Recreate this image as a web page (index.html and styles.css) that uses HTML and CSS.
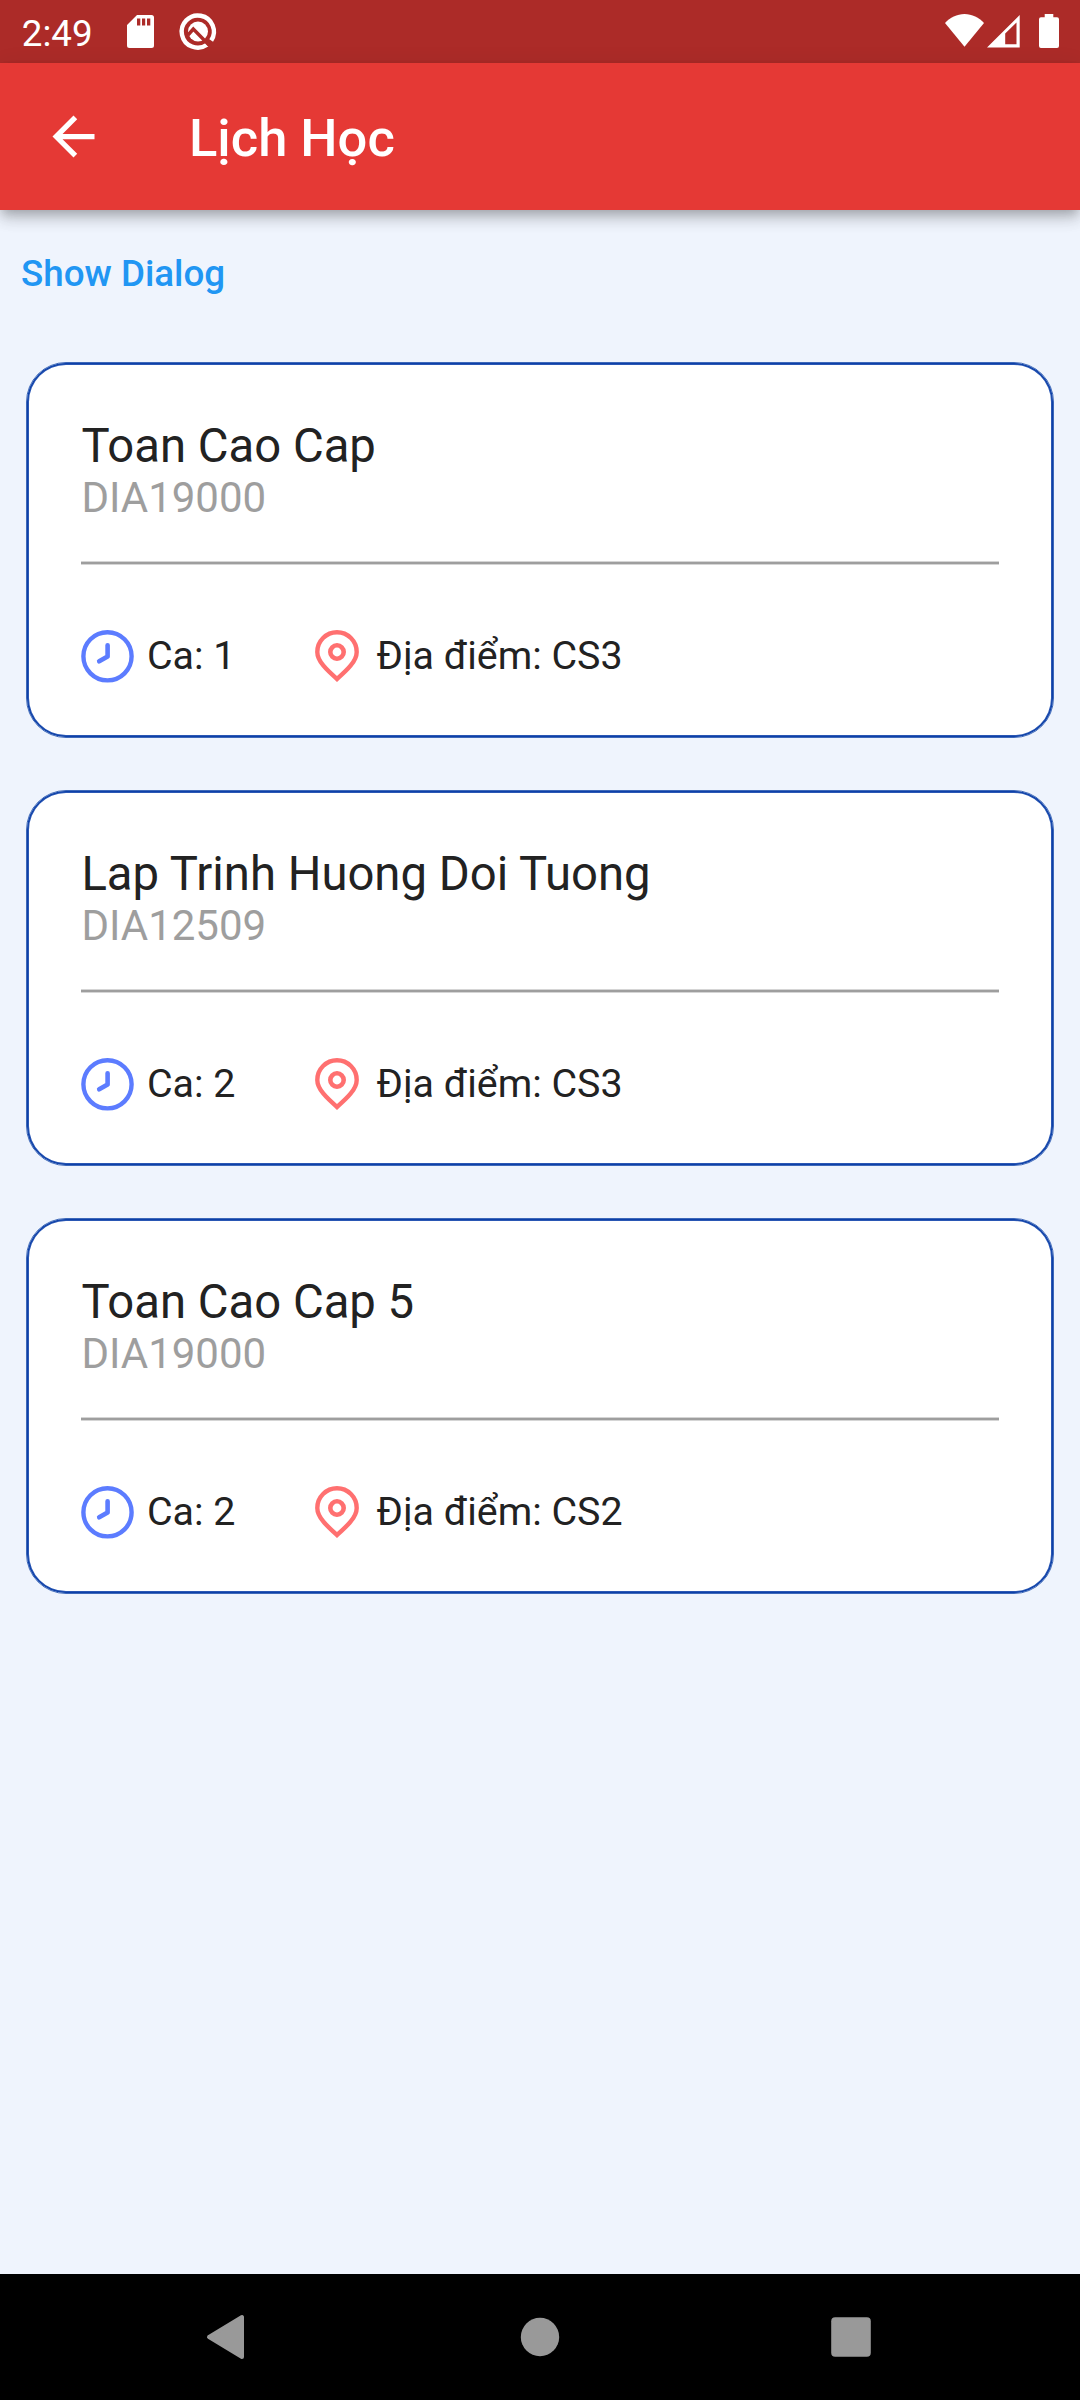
FILE: index.html
```html
<!DOCTYPE html>
<html lang="vi">
<head>
<meta charset="utf-8">
<title>Lịch Học</title>
<link rel="stylesheet" href="styles.css">
</head>
<body>
<svg class="defs" aria-hidden="true">
  <symbol id="clock" viewBox="0 0 53 53">
    <circle cx="26.5" cy="26.3" r="24.1" fill="none" stroke="#5c7cff" stroke-width="4.4"/>
    <path d="M26.6 15.3V26.5L18.2 31.3" fill="none" stroke="#5c7cff" stroke-width="4.6" stroke-linecap="round" stroke-linejoin="round"/>
  </symbol>
  <symbol id="pin" viewBox="0 0 44 53">
    <path d="M22 49C12.500 40.500 2.300 31.500 2.300 21.900A19.700 19.700 0 0 1 41.700 21.900C41.700 31.500 31.500 40.500 22 49Z" fill="none" stroke="#ff7070" stroke-width="4.400"/>
    <circle cx="22" cy="22" r="6.700" fill="none" stroke="#ff7070" stroke-width="4.600"/>
  </symbol>
</svg>
<div class="screen">
  <header class="status-bar">
    <span class="time">2:49</span>
    <svg class="sd" viewBox="0 0 27 33"><path fill="#fff" fill-rule="evenodd" d="M10 0H24.500A2.500 2.500 0 0 1 27 2.500V30.500A2.500 2.500 0 0 1 24.500 33H2.500A2.500 2.500 0 0 1 0 30.500V10ZM10 3.500V10.500H13.300V3.500ZM15 3.500V10.500H18.200V3.500ZM20 3.500V10.500H23.300V3.500Z"/></svg>
    <svg class="q" viewBox="0 0 44 44">
      <path d="M31 34.800A16.100 16.100 0 1 1 35.200 30.500" fill="none" stroke="#fff" stroke-width="4.400"/>
      <circle cx="22" cy="21.500" r="10" fill="#fff"/>
      <path d="M12 25L17.300 19L33 35" fill="none" stroke="#ac2b28" stroke-width="3.400"/>
    </svg>
    <span class="spacer"></span>
    <svg class="wifi" viewBox="0 0 39 33"><path fill="#fff" d="M0 9C5 3.500 12 0 19.500 0S34 3.500 39 9L19.500 32.800Z"/></svg>
    <svg class="cell" viewBox="0 0 33 33"><path fill="#fff" fill-rule="evenodd" d="M0 32.500L32.700 0V32.500ZM18.200 18.500V29.300H29.500V7.500Z"/></svg>
    <svg class="battery" viewBox="0 0 20 34"><path fill="#fff" d="M5.700 0H14.300V3.300H18A2 2 0 0 1 20 5.300V32A2 2 0 0 1 18 34H2A2 2 0 0 1 0 32V5.300A2 2 0 0 1 2 3.300H5.700Z"/></svg>
  </header>
  <div class="app-bar">
    <svg class="back" viewBox="0 0 24 24"><path fill="#fff" d="M20 11H7.830l5.590-5.590L12 4l-8 8 8 8 1.410-1.410L7.830 13H20v-2z"/></svg>
    <h1 class="title">Lịch Học</h1>
  </div>
  <main class="content">
    <button class="text-button">Show Dialog</button>
    <section class="cards">
      <article class="card">
        <h2 class="subject">Toan Cao Cap</h2>
        <p class="code">DIA19000</p>
        <div class="divider"></div>
        <div class="meta">
          <svg class="clock"><use href="#clock"/></svg><span class="shift">Ca: 1</span>
          <svg class="pin"><use href="#pin"/></svg><span>Địa điểm: CS3</span>
        </div>
      </article>
      <article class="card">
        <h2 class="subject">Lap Trinh Huong Doi Tuong</h2>
        <p class="code">DIA12509</p>
        <div class="divider"></div>
        <div class="meta">
          <svg class="clock"><use href="#clock"/></svg><span class="shift">Ca: 2</span>
          <svg class="pin"><use href="#pin"/></svg><span>Địa điểm: CS3</span>
        </div>
      </article>
      <article class="card">
        <h2 class="subject">Toan Cao Cap 5</h2>
        <p class="code">DIA19000</p>
        <div class="divider"></div>
        <div class="meta">
          <svg class="clock"><use href="#clock"/></svg><span class="shift">Ca: 2</span>
          <svg class="pin"><use href="#pin"/></svg><span>Địa điểm: CS2</span>
        </div>
      </article>
    </section>
  </main>
  <nav class="nav-bar">
    <svg viewBox="0 0 84 84"><path d="M22 42L55 22V62Z" fill="#999" stroke="#999" stroke-width="4" stroke-linejoin="round"/></svg>
    <svg viewBox="0 0 84 84"><circle cx="42" cy="42" r="19.200" fill="#999"/></svg>
    <svg viewBox="0 0 84 84"><rect x="22.200" y="22.200" width="39.600" height="39.600" rx="4" fill="#999"/></svg>
  </nav>
</div>
</body>
</html>
```
FILE: styles.css
```css
* { box-sizing: border-box; margin: 0; }
body { font-family: Roboto, "Noto Sans", sans-serif; background: #eff4fd; }
svg { display: block; flex: none; }
.defs { display: none; }
.screen { display: flex; flex-direction: column; width: 1080px; height: 2400px; overflow: hidden; }

.status-bar { display: flex; align-items: flex-start; flex: none; height: 63px; padding: 12px 21px 0; background: #ac2b28; color: #fff; }
.time { width: 105.500px; padding-left: 0.800px; font-size: 36.750px; line-height: 43px; }
.sd { width: 27px; height: 33px; margin-top: 3px; }
.q { width: 44px; height: 44px; margin: -2px 0 0 22.500px; }
.spacer { flex: 1; }
.wifi { width: 39px; height: 33px; margin: 2px 3px 0 0; }
.cell { width: 33px; height: 33px; margin: 2.500px 19px 0 0; }
.battery { width: 20px; height: 34px; margin-top: 2px; }

.app-bar { display: flex; align-items: flex-start; flex: none; height: 147px; padding-left: 42px; background: #e53935; color: #fff; box-shadow: 0 5px 10px -3px rgba(0,0,0,.2), 0 10px 13px rgba(0,0,0,.14), 0 3px 22px rgba(0,0,0,.08); }
.back { width: 63px; height: 63px; margin-top: 42px; }
.title { margin: 44px 0 0 84px; font-size: 52.500px; font-weight: 500; line-height: 62px; }

.content { flex: 1; padding: 42px 26px 0; }
.text-button { display: block; margin-left: -5px; padding: 0; border: 0; background: none; color: #2196f3; font-family: inherit; font-size: 36.750px; font-weight: 500; line-height: 43px; }
.cards { display: flex; flex-direction: column; gap: 52px; margin-top: 67px; }
.card { height: 376px; padding: 55px 54px 0 54.400px; border: 1px solid #3d68b9; border-radius: 40px; background: #fff; box-shadow: inset 0 0 0 1px #0d40a8, inset 0 0 0 2px #2a57b4; }
.subject { color: #222; font-size: 47.250px; font-weight: 400; line-height: 56px; }
.code { color: #9e9e9e; font-size: 42px; line-height: 47px; }
.divider { height: 4px; margin-top: 40px; border: solid #d5d5d5; border-width: 1px 0; background: #9e9e9e; }
.meta { display: flex; align-items: flex-start; height: 53px; margin-top: 65px; color: #222; font-size: 39.375px; line-height: 51px; white-space: nowrap; }
.clock { width: 53px; height: 53px; }
.shift { width: 180.200px; padding-left: 12.600px; }
.pin { width: 44px; height: 53px; margin: 0 17.500px 0 0.500px; }

.nav-bar { display: flex; flex: none; align-items: center; justify-content: center; gap: 227px; height: 126px; background: #000; }
.nav-bar svg { width: 84px; height: 84px; }
```
